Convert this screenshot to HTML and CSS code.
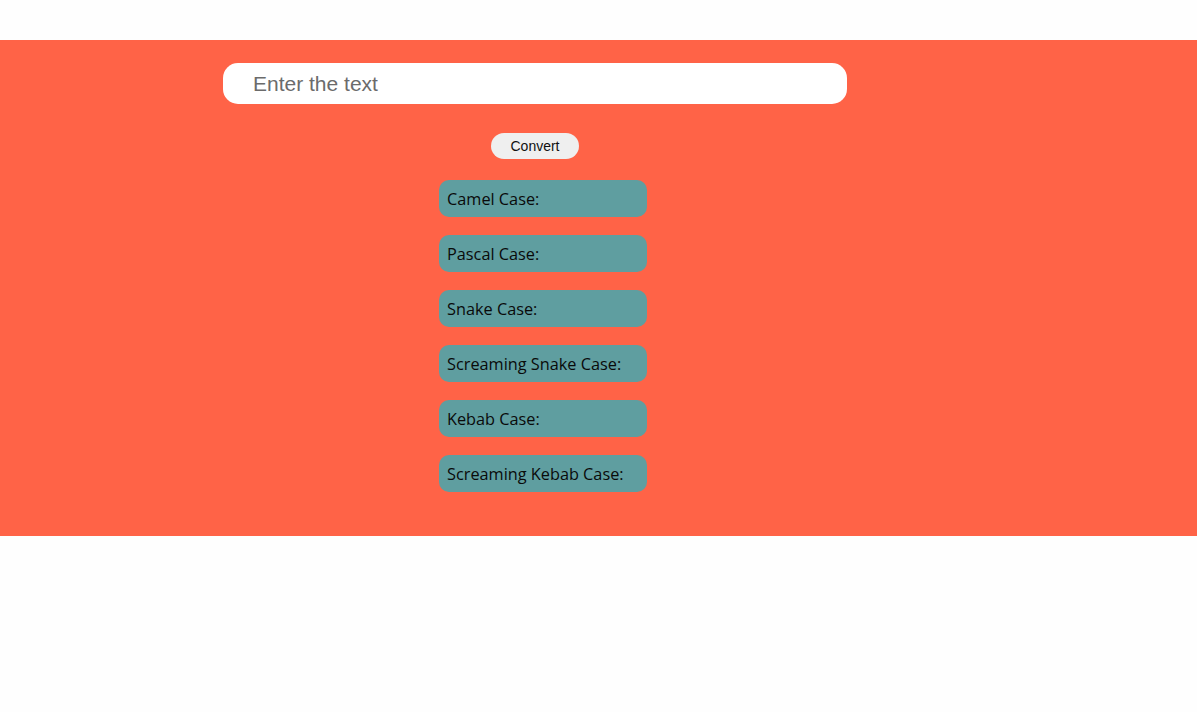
FILE: index.html
```html
<!DOCTYPE html>
<html>
<head>
<meta charset="utf-8">
<link rel="stylesheet" href="styles.css">
</head>
<body>
<div class="band">
  <div class="column">
    <input class="text-input" type="text" placeholder="Enter the text">
    <button class="convert">Convert</button>
    <div class="results">
      <div class="result">Camel Case:</div>
      <div class="result">Pascal Case:</div>
      <div class="result">Snake Case:</div>
      <div class="result">Screaming Snake Case:</div>
      <div class="result">Kebab Case:</div>
      <div class="result">Screaming Kebab Case:</div>
    </div>
  </div>
</div>
</body>
</html>
```

FILE: styles.css
```css
html, body {
  margin: 0;
  padding: 0;
  background: #fefefe;
}
body {
  padding-top: 40px;
}
.band {
  background: #ff6347;
  padding: 23px 0 44px;
}
.column {
  width: 624px;
  margin-left: 223px;
  display: flex;
  flex-direction: column;
  align-items: center;
}
.text-input {
  box-sizing: border-box;
  width: 624px;
  height: 41px;
  border: none;
  border-radius: 15px;
  background: #fff;
  padding: 0 30px;
  font-family: "Liberation Sans", Arial, sans-serif;
  font-size: 21px;
  color: #333;
  outline: none;
  align-self: stretch;
}
.text-input::placeholder {
  color: #6b6b6b;
}
.convert {
  margin-top: 29px;
  width: 88px;
  height: 26px;
  border: none;
  border-radius: 13px;
  background: #efefef;
  font-family: "Liberation Sans", Arial, sans-serif;
  font-size: 14px;
  color: #111;
  padding: 0;
}
.results {
  margin-top: 21px;
  align-self: flex-start;
  margin-left: 216px;
  display: flex;
  flex-direction: column;
  gap: 18px;
}
.result {
  box-sizing: border-box;
  width: 208px;
  height: 37px;
  border-radius: 10px;
  background: #5f9ea0;
  padding-left: 8px;
  display: flex;
  align-items: center;
  font-family: "Open Sans", "Noto Sans", sans-serif;
  font-size: 16.3px;
  font-weight: 500;
  color: #0a0a0a;
}
```
